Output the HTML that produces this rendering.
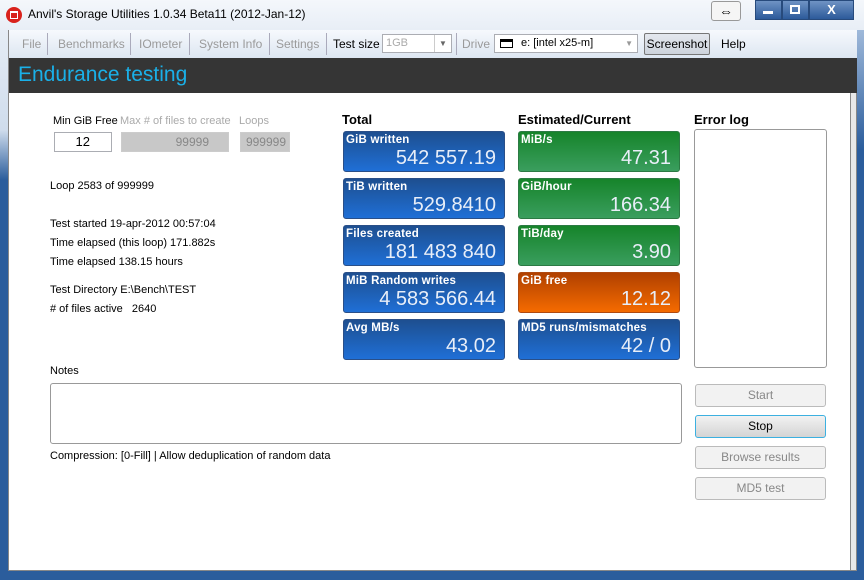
<!DOCTYPE html>
<html><head><meta charset="utf-8"><style>
*{box-sizing:border-box;margin:0;padding:0}
html,body{width:864px;height:580px}
body{position:relative;overflow:hidden;font-family:"Liberation Sans","DejaVu Sans",sans-serif;font-size:11px;color:#000;background:#e6edf5}
.a{position:absolute}
.tile{position:absolute;width:162px;height:41px;border-radius:3px;color:#fff;border:1px solid #2a4f88}
.tile .l{position:absolute;left:2px;top:2px;font-weight:bold;font-size:11.5px;letter-spacing:0.2px}
.tile .v{position:absolute;right:8px;top:15px;font-size:20px;color:#e8eef8}
.b{background:linear-gradient(#1e4f90,#1f6fd6)}
.g{background:linear-gradient(#16842a,#3a9e5e);border-color:#2c7a44}
.o{background:linear-gradient(#b04000,#f56b00);border-color:#b04a10}
.btn{position:absolute;left:695px;width:131px;height:23px;border:1px solid #bbb;border-radius:3px;background:#f2f2f2;color:#888;text-align:center;line-height:21px;font-size:12px}
.m{position:absolute;top:37px;color:#9a9a9a;font-size:12px}
.sep{position:absolute;top:33px;width:1px;height:22px;background:#aab}
</style></head><body>
<div class="a" style="left:0;top:0;width:864px;height:30px;background:linear-gradient(#f4f7fb,#e8eef6)"></div>
<div class="a" style="left:8px;top:30px;width:849px;height:541px;background:#e8e8e8;border:1px solid #888"></div>
<div class="a" style="left:9px;top:30px;width:842px;height:540px;background:#fff;border-right:1px solid #888"></div>
<!-- frame -->
<div class="a" style="left:0;top:30px;width:8px;height:550px;background:linear-gradient(#e6edf5 0px,#cfdcec 100px,#2b5d9c 150px,#2b5d9c)"></div>
<div class="a" style="left:857px;top:30px;width:7px;height:550px;background:linear-gradient(#9fb9da,#2b5d9c 120px,#2b5d9c)"></div>
<div class="a" style="left:0;top:571px;width:864px;height:9px;background:#2b5d9c"></div>
<!-- title -->
<div class="a" style="left:6px;top:7px;width:16px;height:16px;border-radius:8px;background:#d9221c"></div>
<div class="a" style="left:10px;top:11px;width:8px;height:8px;border:1px solid #fff;border-top:2px solid #fff"></div>
<div class="a" style="left:28px;top:7px;font-size:12px">Anvil's Storage Utilities 1.0.34 Beta11 (2012-Jan-12)</div>
<div class="a" style="left:711px;top:1px;width:30px;height:20px;border:1px solid #999;border-radius:3px;background:#f5f5f5;text-align:center;font-size:14px;line-height:18px">⇔</div>
<div class="a" style="left:755px;top:0;width:27px;height:20px;background:linear-gradient(#6f93c4,#2c5a9a);border:1px solid #274a7c"></div>
<div class="a" style="left:763px;top:11px;width:10px;height:3px;background:#fff"></div>
<div class="a" style="left:782px;top:0;width:27px;height:20px;background:linear-gradient(#6f93c4,#2c5a9a);border:1px solid #274a7c"></div>
<div class="a" style="left:790px;top:5px;width:10px;height:9px;border:2px solid #fff"></div>
<div class="a" style="left:809px;top:0;width:45px;height:20px;background:linear-gradient(#6f93c4,#2c5a9a);border:1px solid #274a7c;color:#fff;text-align:center;font-weight:bold;font-size:13px;line-height:18px">X</div>
<!-- menu -->
<div class="a" style="left:9px;top:30px;width:848px;height:28px;background:linear-gradient(#f6f9fd,#dde6f1)"></div>
<div class="m" style="left:22px">File</div><div class="sep" style="left:47px"></div>
<div class="m" style="left:58px">Benchmarks</div><div class="sep" style="left:130px"></div>
<div class="m" style="left:139px">IOmeter</div><div class="sep" style="left:189px"></div>
<div class="m" style="left:199px">System Info</div><div class="sep" style="left:269px"></div>
<div class="m" style="left:276px">Settings</div><div class="sep" style="left:326px"></div>
<div class="m" style="left:333px;color:#000">Test size</div>
<div class="a" style="left:382px;top:34px;width:70px;height:19px;border:1px solid #abadb3;background:#fff;color:#aaa;padding-left:3px;line-height:17px">1GB<span style="position:absolute;right:0;top:0;width:17px;height:17px;border-left:1px solid #ccc;text-align:center;color:#666;font-size:8px">▼</span></div>
<div class="sep" style="left:456px"></div>
<div class="m" style="left:462px">Drive</div>
<div class="a" style="left:494px;top:34px;width:144px;height:19px;border:1px solid #abadb3;background:#fff;padding-left:26px;line-height:17px;font-size:11px">e: [intel x25-m]<span style="position:absolute;left:5px;top:4px;width:13px;height:9px;border:1px solid #000;border-top:3px solid #000"></span><span style="position:absolute;right:4px;top:0;color:#999;font-size:8px">▼</span></div>
<div class="a" style="left:644px;top:33px;width:66px;height:22px;border:1px solid #777;border-radius:2px;background:linear-gradient(#e4e8ee,#cdd3dc);text-align:center;line-height:20px;font-size:12px">Screenshot</div>
<div class="m" style="left:721px;color:#000">Help</div>
<!-- header -->
<div class="a" style="left:9px;top:58px;width:848px;height:35px;background:#353535"></div>
<div class="a" style="left:18px;top:63px;font-size:21px;color:#1ab0e8">Endurance testing</div>
<!-- left controls -->
<div class="a" style="left:53px;top:115px">Min GiB Free</div>
<div class="a" style="left:120px;top:115px;color:#aaa">Max # of files to create</div>
<div class="a" style="left:239px;top:115px;color:#aaa">Loops</div>
<div class="a" style="left:54px;top:132px;width:58px;height:20px;border:1px solid #abadb3;background:#fff;text-align:right;padding-right:21px;font-size:13px;line-height:18px">12</div>
<div class="a" style="left:121px;top:132px;width:108px;height:20px;border:1px solid #ccc;background:#c8c8c8;text-align:right;padding-right:19px;font-size:12px;line-height:18px;color:#888">99999</div>
<div class="a" style="left:240px;top:132px;width:50px;height:20px;border:1px solid #ccc;background:#c8c8c8;text-align:right;padding-right:3px;font-size:12px;line-height:18px;color:#888">999999</div>
<div class="a" style="left:50px;top:180px">Loop 2583 of 999999</div>
<div class="a" style="left:50px;top:218px">Test started 19-apr-2012 00:57:04</div>
<div class="a" style="left:50px;top:237px">Time elapsed (this loop) 171.882s</div>
<div class="a" style="left:50px;top:256px">Time elapsed 138.15 hours</div>
<div class="a" style="left:50px;top:284px">Test Directory E:\Bench\TEST</div>
<div class="a" style="left:50px;top:303px"># of files active &nbsp;&nbsp;2640</div>
<!-- tiles -->
<div class="a" style="left:342px;top:112px;font-weight:bold;font-size:13px">Total</div>
<div class="a" style="left:518px;top:112px;font-weight:bold;font-size:13px">Estimated/Current</div>
<div class="tile b" style="left:343px;top:131px"><div class="l">GiB written</div><div class="v">542 557.19</div></div>
<div class="tile b" style="left:343px;top:178px"><div class="l">TiB written</div><div class="v">529.8410</div></div>
<div class="tile b" style="left:343px;top:225px"><div class="l">Files created</div><div class="v">181 483 840</div></div>
<div class="tile b" style="left:343px;top:272px"><div class="l">MiB Random writes</div><div class="v">4 583 566.44</div></div>
<div class="tile b" style="left:343px;top:319px"><div class="l">Avg MB/s</div><div class="v">43.02</div></div>
<div class="tile g" style="left:518px;top:131px"><div class="l">MiB/s</div><div class="v">47.31</div></div>
<div class="tile g" style="left:518px;top:178px"><div class="l">GiB/hour</div><div class="v">166.34</div></div>
<div class="tile g" style="left:518px;top:225px"><div class="l">TiB/day</div><div class="v">3.90</div></div>
<div class="tile o" style="left:518px;top:272px"><div class="l">GiB free</div><div class="v">12.12</div></div>
<div class="tile b" style="left:518px;top:319px"><div class="l">MD5 runs/mismatches</div><div class="v">42 / 0</div></div>
<!-- error log -->
<div class="a" style="left:694px;top:112px;font-weight:bold;font-size:13px">Error log</div>
<div class="a" style="left:694px;top:129px;width:133px;height:239px;border:1px solid #999;border-radius:3px;background:#fff"></div>
<!-- notes -->
<div class="a" style="left:50px;top:365px">Notes</div>
<div class="a" style="left:50px;top:383px;width:632px;height:61px;border:1px solid #999;border-radius:3px"></div>
<div class="a" style="left:50px;top:450px">Compression: [0-Fill] | Allow deduplication of random data</div>
<div class="btn" style="top:384px">Start</div>
<div class="btn" style="top:415px;border:1px solid #3cb0e0;background:linear-gradient(#f2f2f2,#d4d4d4);color:#000">Stop</div>
<div class="btn" style="top:446px">Browse results</div>
<div class="btn" style="top:477px">MD5 test</div>
</body></html>
